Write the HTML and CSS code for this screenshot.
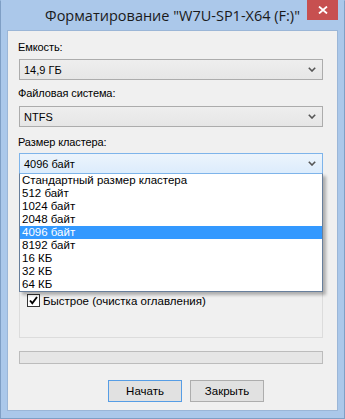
FILE: index.html
```html
<!DOCTYPE html>
<html lang="ru">
<head>
<meta charset="utf-8">
<title>Форматирование</title>
<link rel="stylesheet" href="styles.css">
</head>
<body>
<div class="window">
  <div class="titlebar">
    <span class="tb-spacer"></span>
    <div class="title">Форматирование "W7U-SP1-X64 (F:)"</div>
    <div class="tb-right">
      <div class="close">
        <svg width="10" height="8" viewBox="0 0 10 8"><path d="M1 0.5 L9 7.5 M9 0.5 L1 7.5" stroke="#fff" stroke-width="1.8" fill="none"/></svg>
      </div>
    </div>
  </div>
  <div class="client">
    <div class="lbl lbl-1">Емкость:</div>
    <div class="combo combo-1">
      <span class="combo-text">14,9 ГБ</span>
      <svg class="chev" width="8" height="5" viewBox="0 0 8 5"><path d="M0.8 0.8 L4 4 L7.2 0.8" stroke="#555" stroke-width="1.6" fill="none"/></svg>
    </div>
    <div class="lbl lbl-2">Файловая система:</div>
    <div class="combo combo-2">
      <span class="combo-text">NTFS</span>
      <svg class="chev" width="8" height="5" viewBox="0 0 8 5"><path d="M0.8 0.8 L4 4 L7.2 0.8" stroke="#555" stroke-width="1.6" fill="none"/></svg>
    </div>
    <div class="lbl lbl-3">Размер кластера:</div>
    <div class="combo-wrap">
      <div class="combo combo-open">
        <span class="combo-text">4096 байт</span>
        <svg class="chev" width="8" height="5" viewBox="0 0 8 5"><path d="M0.8 0.8 L4 4 L7.2 0.8" stroke="#555" stroke-width="1.6" fill="none"/></svg>
      </div>
      <ul class="droplist">
        <li>Стандартный размер кластера</li>
        <li>512 байт</li>
        <li>1024 байт</li>
        <li>2048 байт</li>
        <li class="sel">4096 байт</li>
        <li>8192 байт</li>
        <li>16 КБ</li>
        <li>32 КБ</li>
        <li>64 КБ</li>
      </ul>
    </div>
    <div class="group">
      <div class="check-row">
        <span class="checkbox">
          <svg width="11" height="11" viewBox="0 0 11 11"><path d="M2 5.5 L4.3 8.2 L9 2" stroke="#000" stroke-width="1.9" fill="none"/></svg>
        </span>
        <span class="check-label">Быстрое (очистка оглавления)</span>
      </div>
    </div>
    <div class="progress"></div>
    <div class="buttons">
      <div class="btn btn-default">Начать</div>
      <div class="btn">Закрыть</div>
    </div>
  </div>
</div>
</body>
</html>
```
FILE: styles.css
```css
* { box-sizing: border-box; }
html, body { margin: 0; padding: 0; }
body {
  width: 345px;
  height: 419px;
  overflow: hidden;
  background: #abc8ea;
}
.window {
  width: 345px;
  height: 419px;
  background: #abc8ea;
  border: 1px solid #7f9fc5;
  border-top-color: #abc8ea;
  display: flex;
  flex-direction: column;
}
.titlebar {
  height: 29px;
  display: grid;
  grid-template-columns: 1fr auto 1fr;
  align-items: start;
}
.title {
  font-family: "Open Sans", "Noto Sans", sans-serif;
  font-size: 14.5px;
  color: #1a1a1a;
  line-height: 20px;
  padding-top: 5px;
  white-space: nowrap;
}
.tb-right {
  display: flex;
  justify-content: flex-end;
  padding-right: 6px;
}
.close {
  width: 31px;
  height: 20px;
  margin-top: -1px;
  background: #c75050;
  display: flex;
  align-items: center;
  justify-content: center;
}
.client {
  flex: 1;
  margin: 0 6px 7px 6px;
  background: #f0f0f0;
  border: 1px solid #9bb6d7;
  padding: 9px 14px 0 11px;
  display: flex;
  flex-direction: column;
  font-family: "Liberation Sans", Arial, sans-serif;
  font-size: 11px;
  color: #000;
}
.lbl {
  line-height: 14px;
  height: 14px;
  margin-left: -1px;
  letter-spacing: -0.1px;
}
.lbl-2 { margin-top: 6px; }
.lbl-3 { margin-top: 8px; }
.combo {
  height: 21px;
  border: 1px solid #acacac;
  background: linear-gradient(#eeeeee, #e6e6e6);
  display: flex;
  align-items: center;
  justify-content: space-between;
  padding: 0 6px 0 4px;
}
.combo-1 { margin-top: 5px; }
.combo-2 { margin-top: 6px; }
.combo-text { line-height: 14px; }
.chev { display: block; }
.combo-wrap {
  position: relative;
  margin-top: 4px;
}
.combo-open {
  border-color: #7eb4ea;
  background: linear-gradient(#ecf4fc, #dcecfc);
}
.droplist {
  position: absolute;
  left: 0;
  right: 0;
  top: 20px;
  margin: 0;
  padding: 0;
  list-style: none;
  background: #fff;
  border: 1px solid #687f9c;
  border-top-color: #7eb4ea;
  box-shadow: 3px 3px 3px rgba(0, 0, 0, 0.28);
  z-index: 2;
}
.droplist li {
  height: 13px;
  line-height: 13px;
  padding-left: 2px;
  font-size: 11.5px;
  white-space: nowrap;
}
.droplist li.sel {
  background: #3399ff;
  color: #fff;
}
.group {
  margin-top: 86px;
  height: 78px;
  border: 1px solid #dcdcdc;
  padding: 33px 0 0 7px;
}
.check-row {
  display: flex;
  align-items: center;
  height: 13px;
}
.checkbox {
  width: 13px;
  height: 13px;
  border: 1px solid #333;
  background: #fff;
  display: flex;
  align-items: center;
  justify-content: center;
  margin-right: 3px;
}
.checkbox svg { display: block; }
.check-label { line-height: 14px; font-size: 11.5px; }
.progress {
  margin-top: 13px;
  height: 13px;
  background: #e6e6e6;
  border: 1px solid #bcbcbc;
}
.buttons {
  margin-top: 16px;
  display: flex;
  gap: 8px;
  padding-left: 89px;
}
.btn {
  width: 74px;
  height: 22px;
  border: 1px solid #adadad;
  background: #e1e1e1;
  display: flex;
  align-items: center;
  justify-content: center;
  line-height: 14px;
  font-size: 11.5px;
}
.btn-default {
  border-color: #569de5;
}
```
